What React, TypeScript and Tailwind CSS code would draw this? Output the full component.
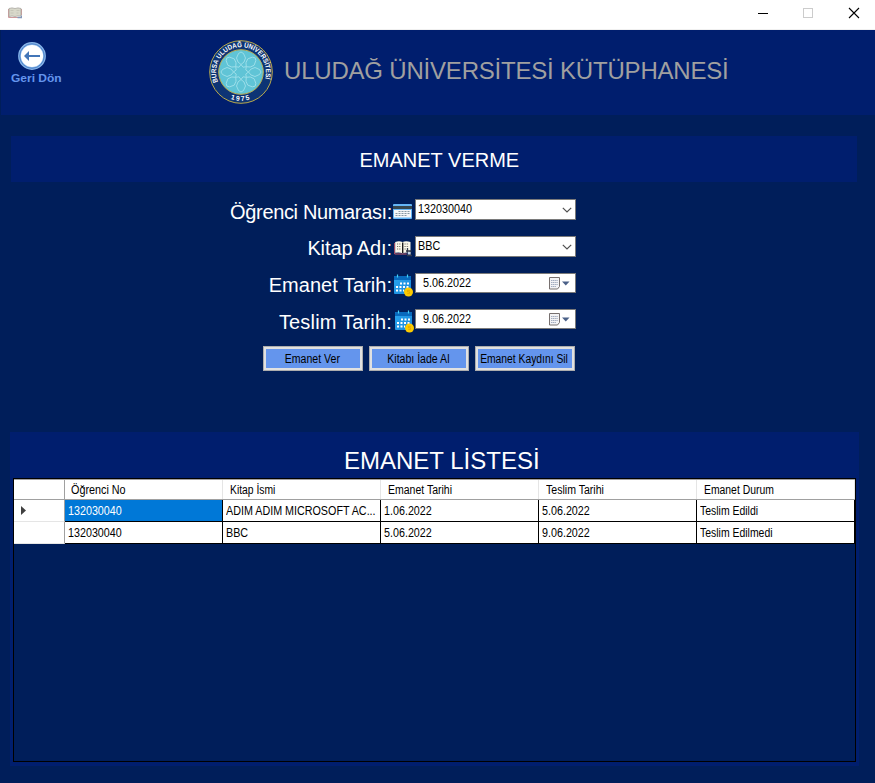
import type { ReactNode } from "react";

const COLUMNS = [
  { title: "Öğrenci No", scale: "-ml-px scale-x-[0.9]" },
  { title: "Kitap İsmi", scale: "scale-x-[0.86]" },
  { title: "Emanet Tarihi", scale: "scale-x-[0.875]" },
  { title: "Teslim Tarihi", scale: "scale-x-[0.88]" },
  { title: "Emanet Durum", scale: "scale-x-[0.865]" },
];

const ROWS = [
  ["132030040", "ADIM ADIM MICROSOFT AC...", "1.06.2022", "5.06.2022", "Teslim Edildi"],
  ["132030040", "BBC", "5.06.2022", "9.06.2022", "Teslim Edilmedi"],
];

function WindowIcon() {
  return (
    <svg className="h-[12px] w-[14px]" viewBox="0 0 14 12">
      <path d="M.5 2v8.500h10.500M13.500 2v6" fill="none" stroke="#cf9a9c" />
      <path d="M1 1.500Q4 .3 7 1.500Q10 .3 13 1.500V9Q10 8.500 7 9.500Q4 8.500 1 9.500Z" fill="#d8d8ca" stroke="#aaa79f" strokeWidth=".8" />
      <path d="M2.500 3.500h3M8.500 3.500h3M2.500 6h3M8.500 6h2" stroke="#c2c1b4" strokeWidth=".8" />
      <path d="M9.500 10.500h4v-2" fill="none" stroke="#8598b8" strokeWidth="1.300" />
    </svg>
  );
}

function BookIcon() {
  return (
    <svg className="ml-px h-[17px] w-[18px]" viewBox="0 0 18 17">
      <path d="M.7 3v11h12" fill="none" stroke="#d9606a" strokeWidth=".9" />
      <path d="M1.200 2Q5 .3 8.500 2Q12 .3 16.500 2V12.800Q12.500 11.800 8.700 13.300Q5 11.800 1.200 12.800Z" fill="#fbf8ea" />
      <path d="M8.700 2.500V13" stroke="#1c1c1c" strokeWidth="1.400" />
      <path d="M3 4h4M3 6.500h4M3 9h4M10.500 4h4.500M10.500 6.500h4.500M10.500 9h2" stroke="#77736a" strokeWidth="1" strokeDasharray="1.200 1" />
      <path d="M13.500 8v5M16.200 10.500v5M12 11h5.500M13 15.500h5" stroke="#333b4b" strokeWidth="1.300" />
      <path d="M13.800 12h2.800v2.500h-2.800z" fill="#c3d3e8" />
    </svg>
  );
}

function CardIcon() {
  return (
    <svg className="h-[15px] w-[19px]" viewBox="0 0 19 15">
      <rect width="19" height="15" rx="1" fill="#64b5f6" />
      <rect y="2" width="19" height="3" fill="#37474f" />
      <rect x="1" y="6" width="17" height="7.500" fill="#f5f6f8" />
      <path d="M5.500 7.500h11M2.500 9.500h14M2.500 11.500h11" stroke="#8798a5" strokeWidth="1" strokeDasharray="2 1" />
    </svg>
  );
}

function CalendarIcon() {
  return (
    <svg className="h-[23px] w-[20px]" viewBox="0 0 20 23">
      <defs>
        <linearGradient id="cal" x1="0" y1="0" x2="1" y2="1">
          <stop stopColor="#2ba6ee" />
          <stop offset="1" stopColor="#1687dc" />
        </linearGradient>
      </defs>
      <rect x="1" y="2" width="17" height="18" rx="1" fill="url(#cal)" />
      <path d="M1 6V3q0-1 1-1h15q1 0 1 1v3z" fill="#0869bd" />
      <path d="M4.500 .5v3M14.500 .5v3" stroke="#45d0f5" strokeWidth="1.200" />
      <path d="M7 9.500h10M3 13h14M3 16.500h8" stroke="#fff" strokeWidth="2" strokeDasharray="2 1.500" />
      <circle cx="15.500" cy="18" r="4.500" fill="#fccb00" />
      <path d="M17 16.300h-2.500v1.500h2v1.800H14.300" fill="none" stroke="#e5a300" strokeWidth=".8" />
    </svg>
  );
}

function Seal() {
  return (
    <svg className="h-16 w-16 shrink-0" viewBox="0 0 64 64">
      <defs>
        <path id="sealTop" d="M9 42A25 25 0 1 1 55 42" />
        <path id="sealBottom" d="M10 50.800A29 29 0 0 0 54 50.800" />
      </defs>
      <circle cx="32" cy="32" r="31.300" fill="#0d3475" stroke="#b9aa4c" strokeWidth="1" />
      <circle cx="32" cy="32" r="22.300" fill="#60c4d6" stroke="#c0b050" strokeWidth="1" />
      <g fill="none" stroke="#a0e0ea" strokeWidth=".9">
        {[0, 45, 90, 135, 180, 225, 270, 315].map((angle) => (
          <g key={angle} transform={`rotate(${angle} 32 32)`}>
            <path d="M32 24.500L29 22L27.500 18L29.500 13.500L32 12L34.500 13.500L36.500 18L35 22Z" />
          </g>
        ))}
        <path d="M32 24.500L34 27.200L37.300 26.700L36.800 30L39.500 32L36.800 34L37.300 37.300L34 36.800L32 39.500L30 36.800L26.700 37.300L27.200 34L24.500 32L27.200 30L26.700 26.700L30 27.200Z" />
      </g>
      <g fill="#fff" fontFamily="Liberation Sans, sans-serif" fontWeight="700">
        <text fontSize="6.900">
          <textPath href="#sealTop" startOffset="0" textLength="95" lengthAdjust="spacingAndGlyphs">BURSA ULUDAĞ ÜNİVERSİTESİ</textPath>
        </text>
        <text fontSize="6.800" textAnchor="middle" letterSpacing="1.500">
          <textPath href="#sealBottom" startOffset="50%">1975</textPath>
        </text>
      </g>
    </svg>
  );
}

function FieldRow({ label, labelClass, rowClass, icon, children }: { label: string; labelClass: string; rowClass: string; icon: ReactNode; children: ReactNode }) {
  return (
    <div className={`flex items-start ${rowClass}`}>
      <div className={`w-[392px] text-right text-[20px] leading-[24px] text-white ${labelClass}`}>{label}</div>
      <div className="flex h-6 w-[23px] shrink-0 items-center justify-start pl-px">{icon}</div>
      {children}
    </div>
  );
}

function Combo({ value }: { value: string }) {
  return (
    <div className="flex h-[21px] w-[161px] items-center justify-between border border-[#7a7a7a] bg-white pr-[3px] pl-[2px] text-[12px] leading-[17px] text-black">
      <span className="origin-left scale-x-[0.9]">{value}</span>
      <svg className="h-[6px] w-[10px]" viewBox="0 0 10 6">
        <path d="M.8 .8L5 5L9.200 .8" fill="none" stroke="#505050" strokeWidth="1.200" />
      </svg>
    </div>
  );
}

function DateField({ value }: { value: string }) {
  return (
    <div className="flex h-5 w-[161px] items-center justify-between border border-[#7a7a7a] bg-white pr-[5px] pl-[7px] text-[12px] leading-[18px] text-black">
      <span className="origin-left scale-x-[0.9]">{value}</span>
      <svg className="h-[13px] w-[21px]" viewBox="0 0 21 13">
        <path d="M.5 .5h10v9l-2 2.500H.5z" fill="#f3f3f5" stroke="#77706f" strokeWidth="1" />
        <path d="M2 3.500h7M2 5.500h7M2 7.500h7M2 9.500h5" stroke="#a3acbf" strokeWidth="1.200" strokeDasharray="1.300 .5" />
        <path d="M13 4.500h7.500L16.800 8.500z" fill="#4a6088" />
      </svg>
    </div>
  );
}

function ActionButton({ children, scale }: { children: ReactNode; scale: string }) {
  return (
    <button className="h-[25px] w-[100px] border border-[#adadad] bg-[#e1e1e1] p-[2px] text-[12px] text-black">
      <span className="flex h-full items-center justify-center bg-[#6495ed] whitespace-nowrap">
        <span className={`shrink-0 ${scale}`}>{children}</span>
      </span>
    </button>
  );
}

export default function App() {
  return (
    <div className="flex h-[783px] w-[875px] flex-col overflow-hidden bg-[#001e5a] font-['Liberation_Sans',Arial,sans-serif]">
      <div className="flex h-[30px] shrink-0 items-start justify-between border-b border-[#f0f0f0] bg-white pt-[7px] pr-[15px] pl-2">
        <WindowIcon />
        <svg className="h-[12px] w-[103px]" viewBox="0 0 103 12">
          <path d="M1 6.500h10" stroke="#000" />
          <rect x="46.500" y="1.500" width="9" height="9" fill="none" stroke="#ccc" />
          <path d="M92 1L102 11M102 1L92 11" stroke="#000" strokeWidth="1.100" />
        </svg>
      </div>

      <header className="ml-px flex h-[85px] shrink-0 bg-[#001e6e]">
        <div className="flex w-[208px] flex-col items-start pt-[12px] pl-[10px]">
          <svg className="ml-[7px] h-7 w-7" viewBox="0 0 28 28">
            <circle cx="14" cy="14" r="12.500" fill="#fff" stroke="#87b5e9" strokeWidth="2.800" />
            <circle cx="14" cy="14" r="12.300" fill="none" stroke="#4d82c8" strokeWidth="1" />
            <path d="M22 14H8" stroke="#4376b8" strokeWidth="2" />
            <path d="M6 14L11 9V19Z" fill="#4376b8" />
          </svg>
          <span className="mt-[2px] origin-left scale-x-[1.09] text-[11px] leading-[13px] font-bold text-[#6495ed]">Geri Dön</span>
        </div>
        <div className="pt-[10px]"><Seal /></div>
        <h1 className="pt-[27px] pl-[11px] text-[24px] leading-[28px] tracking-[-0.2px] whitespace-nowrap text-[#a0a0a0]">
          ULUDAĞ ÜNİVERSİTESİ KÜTÜPHANESİ
        </h1>
      </header>

      <div className="mt-[21px] ml-[11px] h-[46px] w-[846px] shrink-0 bg-[#001e6e] pl-[348.500px] text-[20px] leading-[48px] text-white">
        EMANET VERME
      </div>

      <section className="h-[250px] shrink-0 pt-[17px]">
        <FieldRow label="Öğrenci Numarası:" labelClass="pt-px tracking-[-0.35px]" rowClass="h-[37px]" icon={<CardIcon />}>
          <Combo value="132030040" />
        </FieldRow>
        <FieldRow label="Kitap Adı:" labelClass="tracking-[-0.1px]" rowClass="h-[37px]" icon={<BookIcon />}>
          <Combo value="BBC" />
        </FieldRow>
        <FieldRow label="Emanet Tarih:" labelClass="tracking-[0.02px]" rowClass="h-[36px]" icon={<CalendarIcon />}>
          <DateField value="5.06.2022" />
        </FieldRow>
        <FieldRow label="Teslim Tarih:" labelClass="pt-px tracking-[0.18px]" rowClass="h-[38px]" icon={<span className="pl-px"><CalendarIcon /></span>}>
          <DateField value="9.06.2022" />
        </FieldRow>
        <div className="-mt-px flex gap-[6px] pl-[263px]">
          <ActionButton scale="-ml-px scale-x-[0.88]">Emanet Ver</ActionButton>
          <ActionButton scale="-ml-[2px] scale-x-[0.88]">Kitabı İade Al</ActionButton>
          <ActionButton scale="-ml-px scale-x-[0.86]">Emanet Kaydını Sil</ActionButton>
        </div>
      </section>

      <section className="ml-[10px] flex h-[334px] w-[849px] shrink-0 flex-col bg-[#001e6e] pl-[3px]">
        <h2 className="h-[46px] pt-[15px] pl-[331px] text-[24px] leading-[28px] text-white">EMANET LİSTESİ</h2>
        <div className="h-[284px] w-[843px] border border-black bg-[#001e5a] text-[12px] text-black">
          <div className="flex h-[21px] w-[841px] border-y border-[#a0a0a0] bg-white">
            <div className="w-[51px] border-r border-[#a0a0a0]" />
            {COLUMNS.map((column) => (
              <div key={column.title} className="w-[158px] border-r border-[#e5e5e5] pl-[7px] leading-[20px]">
                <span className={`inline-block origin-left whitespace-nowrap ${column.scale}`}>{column.title}</span>
              </div>
            ))}
          </div>
          {ROWS.map((row, rowIndex) => (
            <div key={rowIndex} className="flex h-[22px] w-[841px]">
              <div className="flex w-[51px] items-center border-r border-b border-r-[#a0a0a0] border-b-[#e5e5e5] bg-white pl-[7px]">
                {rowIndex === 0 && (
                  <svg className="h-[9px] w-[5px]" viewBox="0 0 5 9"><path d="M0 0L5 4.500L0 9z" fill="#404040" /></svg>
                )}
              </div>
              {row.map((cell, index) => (
                <div
                  key={index}
                  className={`w-[158px] overflow-hidden border-r border-b border-black pl-[3px] leading-[22px] whitespace-nowrap ${
                    index === 0 && rowIndex === 0 ? "bg-[#0078d7] text-white" : "bg-white"
                  }`}
                >
                  <span className={`inline-block origin-left ${index === 4 ? "scale-x-[0.87]" : "scale-x-[0.895]"}`}>{cell}</span>
                </div>
              ))}
            </div>
          ))}
        </div>
      </section>
    </div>
  );
}
